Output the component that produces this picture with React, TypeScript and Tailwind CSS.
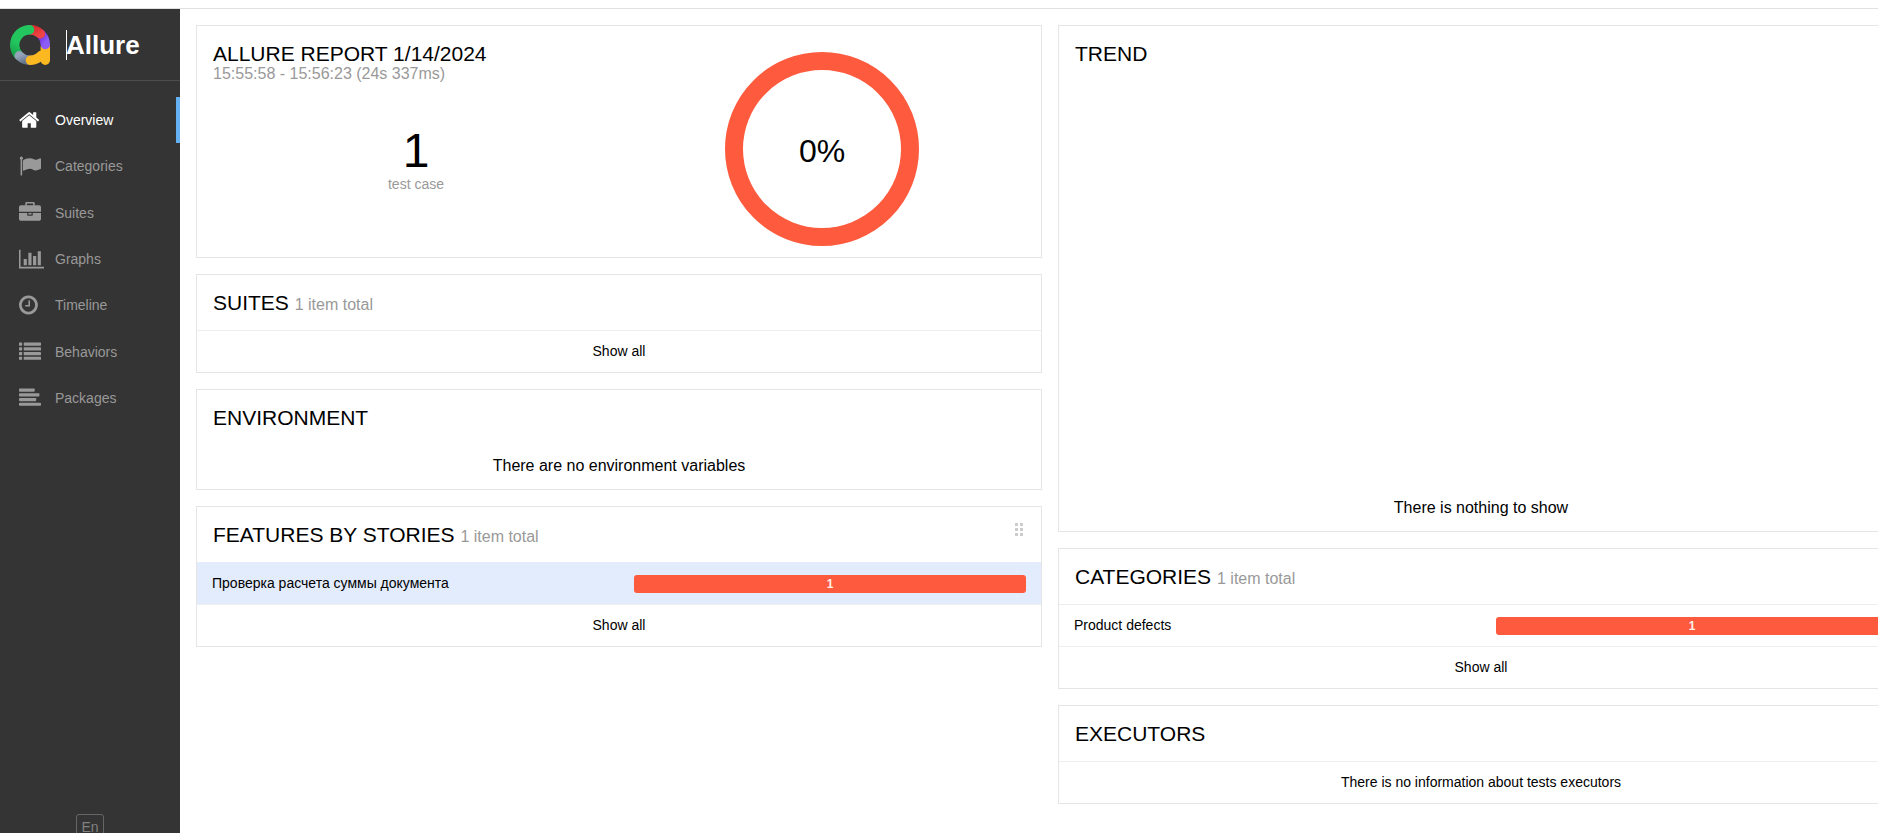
import type { ReactNode } from "react";

const BARS = [128, 512, 896, 1280];

type NavItem = { label: string; viewBox: string; size: string; icon: ReactNode; active?: boolean };

const NAV: NavItem[] = [
  {
    label: "Overview",
    active: true,
    viewBox: "64 0 1792 1792",
    size: "w-[22px]",
    icon: (
      <path d="M1472 992v480q0 26-19 45t-45 19h-384v-384h-256v384h-384q-26 0-45-19t-19-45v-480q0-1 .5-3t.5-3l575-474 575 474q1 2 1 6zm223-69l-62 74q-8 9-21 11h-3q-13 0-21-7l-692-577-692 577q-12 8-24 7-13-2-21-11l-62-74q-8-10-7-23.5t11-21.5l719-599q32-26 76-26t76 26l244 204v-195q0-14 9-23t23-9h192q14 0 23 9t9 23v408l219 182q10 8 11 21.5t-7 23.5z" />
    ),
  },
  {
    label: "Categories",
    viewBox: "0 0 1792 1792",
    size: "w-[22px]",
    icon: (
      <path d="M320 256q0 72-64 110v1266q0 13-9.5 22.5t-22.5 9.5h-64q-13 0-22.5-9.5t-9.5-22.5v-1266q-64-38-64-110 0-53 37.5-90.5t90.5-37.5 90.5 37.5 37.5 90.5zm1472 64v763q0 25-12.5 38.5t-39.5 27.5q-215 116-369 116-61 0-123.5-22t-108.5-48-115.5-48-142.5-22q-192 0-464 146-17 9-33 9-26 0-45-19t-19-45v-742q0-32 31-55 21-14 79-43 236-120 421-120 107 0 200 29t219 88q38 19 88 19 54 0 117.5-21t110-47 88-47 54.5-21q26 0 45 19t19 45z" />
    ),
  },
  {
    label: "Suites",
    viewBox: "0 0 1792 1792",
    size: "w-[22px]",
    icon: (
      <path d="M640 256h512v-128h-512v128zm1152 640v480q0 66-47 113t-113 47h-1472q-66 0-113-47t-47-113v-480h672v160q0 26 19 45t45 19h320q26 0 45-19t19-45v-160h672zm-768 0v128h-256v-128h256zm768-480v384h-1792v-384q0-66 47-113t113-47h352v-160q0-40 28-68t68-28h576q40 0 68 28t28 68v160h352q66 0 113 47t47 113z" />
    ),
  },
  {
    label: "Graphs",
    viewBox: "0 0 2048 1792",
    size: "w-[25px]",
    icon: (
      <path d="M640 896v512h-256v-512h256zm384-512v1024h-256v-1024h256zm1024 1152v128h-2048v-1536h128v1408h1920zm-640-896v768h-256v-768h256zm384-384v1152h-256v-1152h256z" />
    ),
  },
  {
    label: "Timeline",
    viewBox: "128 0 1792 1792",
    size: "w-[22px]",
    icon: (
      <path d="M1024 544v448q0 14-9 23t-23 9h-320q-14 0-23-9t-9-23v-64q0-14 9-23t23-9h224v-352q0-14 9-23t23-9h64q14 0 23 9t9 23zm416 352q0-148-73-273t-198-198-273-73-273 73-198 198-73 273 73 273 198 198 273 73 273-73 198-198 73-273zm224 0q0 209-103 385.5t-279.5 279.5-385.5 103-385.5-103-279.5-279.5-103-385.5 103-385.5 279.5-279.5 385.5-103 385.5 103 279.5 279.5 103 385.5z" />
    ),
  },
  {
    label: "Behaviors",
    viewBox: "0 0 1792 1792",
    size: "w-[22px]",
    icon: BARS.map((y) => (
      <g key={y}>
        <rect x="0" y={y} width="256" height="256" rx="32" />
        <rect x="384" y={y} width="1408" height="256" rx="32" />
      </g>
    )),
  },
  {
    label: "Packages",
    viewBox: "0 0 1792 1792",
    size: "w-[22px]",
    icon: [1280, 1664, 1408, 1792].map((w, i) => (
      <rect key={w} x="0" y={BARS[i]} width={w} height="256" rx="64" />
    )),
  },
];

function Logo() {
  return (
    <svg className="size-10" viewBox="0 0 40 40" fill="none" strokeWidth="9.4" strokeLinecap="round" aria-hidden="true">
      <defs>
        <linearGradient id="lg-green" x1="0" y1="1" x2="0.3" y2="0">
          <stop offset="0" stopColor="#16a34a" />
          <stop offset="0.5" stopColor="#22c55e" />
        </linearGradient>
        <linearGradient id="lg-red" x1="0" y1="0" x2="1" y2="1">
          <stop offset="0" stopColor="#d92d2d" />
          <stop offset="1" stopColor="#ef4444" />
        </linearGradient>
        <linearGradient id="lg-violet" x1="0" y1="0" x2="0.6" y2="1">
          <stop offset="0" stopColor="#6d28d9" />
          <stop offset="1" stopColor="#8b5cf6" />
        </linearGradient>
        <linearGradient id="lg-grey" x1="0" y1="0" x2="1" y2="1">
          <stop offset="0" stopColor="#94a3b8" />
          <stop offset="1" stopColor="#64748b" />
        </linearGradient>
      </defs>
      <path stroke="#fbb820" d="M35.3 22V35.3" />
      <path stroke="url(#lg-violet)" d="M30.8 9.2A15.3 15.3 0 0 1 35.3 19.6" />
      <path stroke="url(#lg-red)" d="M20 4.7A15.3 15.3 0 0 1 30.4 8.8" />
      <path stroke="url(#lg-green)" d="M9.2 30.8A15.3 15.3 0 0 1 19.6 4.7" />
      <path stroke="url(#lg-grey)" d="M20 35.3A15.3 15.3 0 0 1 9.2 30.8" />
      <path stroke="#fbb820" d="M20.4 35.3A15.3 15.3 0 0 0 31.5 30.2" />
    </svg>
  );
}

function Sidebar() {
  return (
    <aside className="flex w-[180px] shrink-0 flex-col bg-[#343434]">
      <a href="#" className="flex h-[72px] items-center gap-4 border-b border-[#4d4d4d] pl-[10px] text-white">
        <Logo />
        <span className="text-[26px] leading-[30px] font-bold shadow-[inset_1px_0_0_#fff]">Allure</span>
      </a>
      <nav className="mt-4 grid h-[324px] auto-rows-fr">
        {NAV.map((item) => (
          <a
            key={item.label}
            href={`#${item.label.toLowerCase()}`}
            className={
              item.active
                ? "flex items-center border-r-4 border-[#64b0f2] pl-[19px] text-sm text-white"
                : "flex items-center pl-[19px] text-sm text-[#999]"
            }
          >
            <span className="w-9">
              <svg className={`h-[22px] ${item.size}`} viewBox={item.viewBox} fill="currentColor" aria-hidden="true">
                {item.icon}
              </svg>
            </span>
            {item.label}
          </a>
        ))}
      </nav>
      <div className="mt-auto flex justify-center pb-4">
        <button type="button" className="rounded-[3px] border border-[#666] px-1 py-1 text-sm leading-4 text-[#808080]">
          En
        </button>
      </div>
    </aside>
  );
}

function Card({ children }: { children: ReactNode }) {
  return <section className="border border-[#e5e5e5] bg-white">{children}</section>;
}

function CardHeader({ title, note, grip }: { title: string; note?: string; grip?: boolean }) {
  return (
    <div className="flex items-start justify-between p-4">
      <h2 className="text-[21px] leading-[23px] uppercase">
        {title} {note && <span className="text-base leading-none text-[#999] normal-case">{note}</span>}
      </h2>
      {grip && (
        <svg className="mr-[2px] h-[13px] w-2" viewBox="0 0 8 13" fill="#ccc" aria-hidden="true">
          {[0, 5, 10].map((y) => (
            <g key={y}>
              <rect x="0" y={y} width="3" height="3" />
              <rect x="5" y={y} width="3" height="3" />
            </g>
          ))}
        </svg>
      )}
    </div>
  );
}

function StatusRow({ label, count, highlighted }: { label: string; count: number; highlighted?: boolean }) {
  return (
    <a
      href="#"
      className={
        highlighted
          ? "grid grid-cols-[14fr_13fr] items-center border-t border-[#e3ecfd] bg-[#e3ecfd] px-[15px] py-3 text-sm leading-[17px]"
          : "grid grid-cols-[14fr_13fr] items-center border-t border-[#eceff1] px-[15px] py-3 text-sm leading-[17px]"
      }
    >
      <span>{label}</span>
      <span className="-my-1 rounded-[3px] bg-[#fd5a3e] text-center text-xs leading-[18px] font-bold text-[#fff0e8]">{count}</span>
    </a>
  );
}

function ShowAll() {
  return (
    <a href="#" className="block border-t border-[#eceff1] py-3 text-center text-sm leading-[17px]">
      Show all
    </a>
  );
}

function Message({ children }: { children: ReactNode }) {
  return <p className="pt-3 pb-[14px] text-center text-base leading-[18px]">{children}</p>;
}

export default function App() {
  return (
    <div className="h-screen overflow-hidden bg-white font-['Liberation_Sans',Arial,sans-serif] text-black">
      <div className="flex h-[calc(100%+23px)] w-[calc(100%+42px)] flex-col pt-2">
        <div className="flex grow border-t border-[#e0e0e0]">
          <Sidebar />
          <main className="grid grow grid-cols-2 items-start gap-4 p-4">
            <div className="flex flex-col gap-4">
              <Card>
                <div className="grid grid-cols-2 px-4 pt-4 pb-[11px]">
                  <div>
                    <h2 className="text-[21px] leading-[23px] uppercase">Allure Report 1/14/2024</h2>
                    <p className="text-base leading-[18px] text-[#999]">15:55:58 - 15:56:23 (24s 337ms)</p>
                    <div className="mt-11 text-center">
                      <div className="text-5xl leading-[48px]">1</div>
                      <div className="text-sm leading-[18px] text-[#999]">test case</div>
                    </div>
                  </div>
                  <div className="flex justify-center pt-[10px]">
                    <svg className="size-[194px]" viewBox="0 0 194 194" role="img" aria-label="0%">
                      <circle cx="97" cy="97" r="88" fill="none" stroke="#fd5a3e" strokeWidth="18" />
                      <text x="97" y="110" fontSize="32" textAnchor="middle">
                        0%
                      </text>
                    </svg>
                  </div>
                </div>
              </Card>
              <Card>
                <CardHeader title="Suites" note="1 item total" />
                <ShowAll />
              </Card>
              <Card>
                <CardHeader title="Environment" />
                <Message>There are no environment variables</Message>
              </Card>
              <Card>
                <CardHeader title="Features by stories" note="1 item total" grip />
                <StatusRow label="Проверка расчета суммы документа" count={1} highlighted />
                <ShowAll />
              </Card>
            </div>
            <div className="flex flex-col gap-4">
              <Card>
                <CardHeader title="Trend" />
                <div className="flex min-h-[450px] flex-col justify-end">
                  <Message>There is nothing to show</Message>
                </div>
              </Card>
              <Card>
                <CardHeader title="Categories" note="1 item total" />
                <StatusRow label="Product defects" count={1} />
                <ShowAll />
              </Card>
              <Card>
                <CardHeader title="Executors" />
                <p className="border-t border-[#eceff1] py-3 text-center text-sm leading-[17px]">
                  There is no information about tests executors
                </p>
              </Card>
            </div>
          </main>
        </div>
      </div>
    </div>
  );
}
